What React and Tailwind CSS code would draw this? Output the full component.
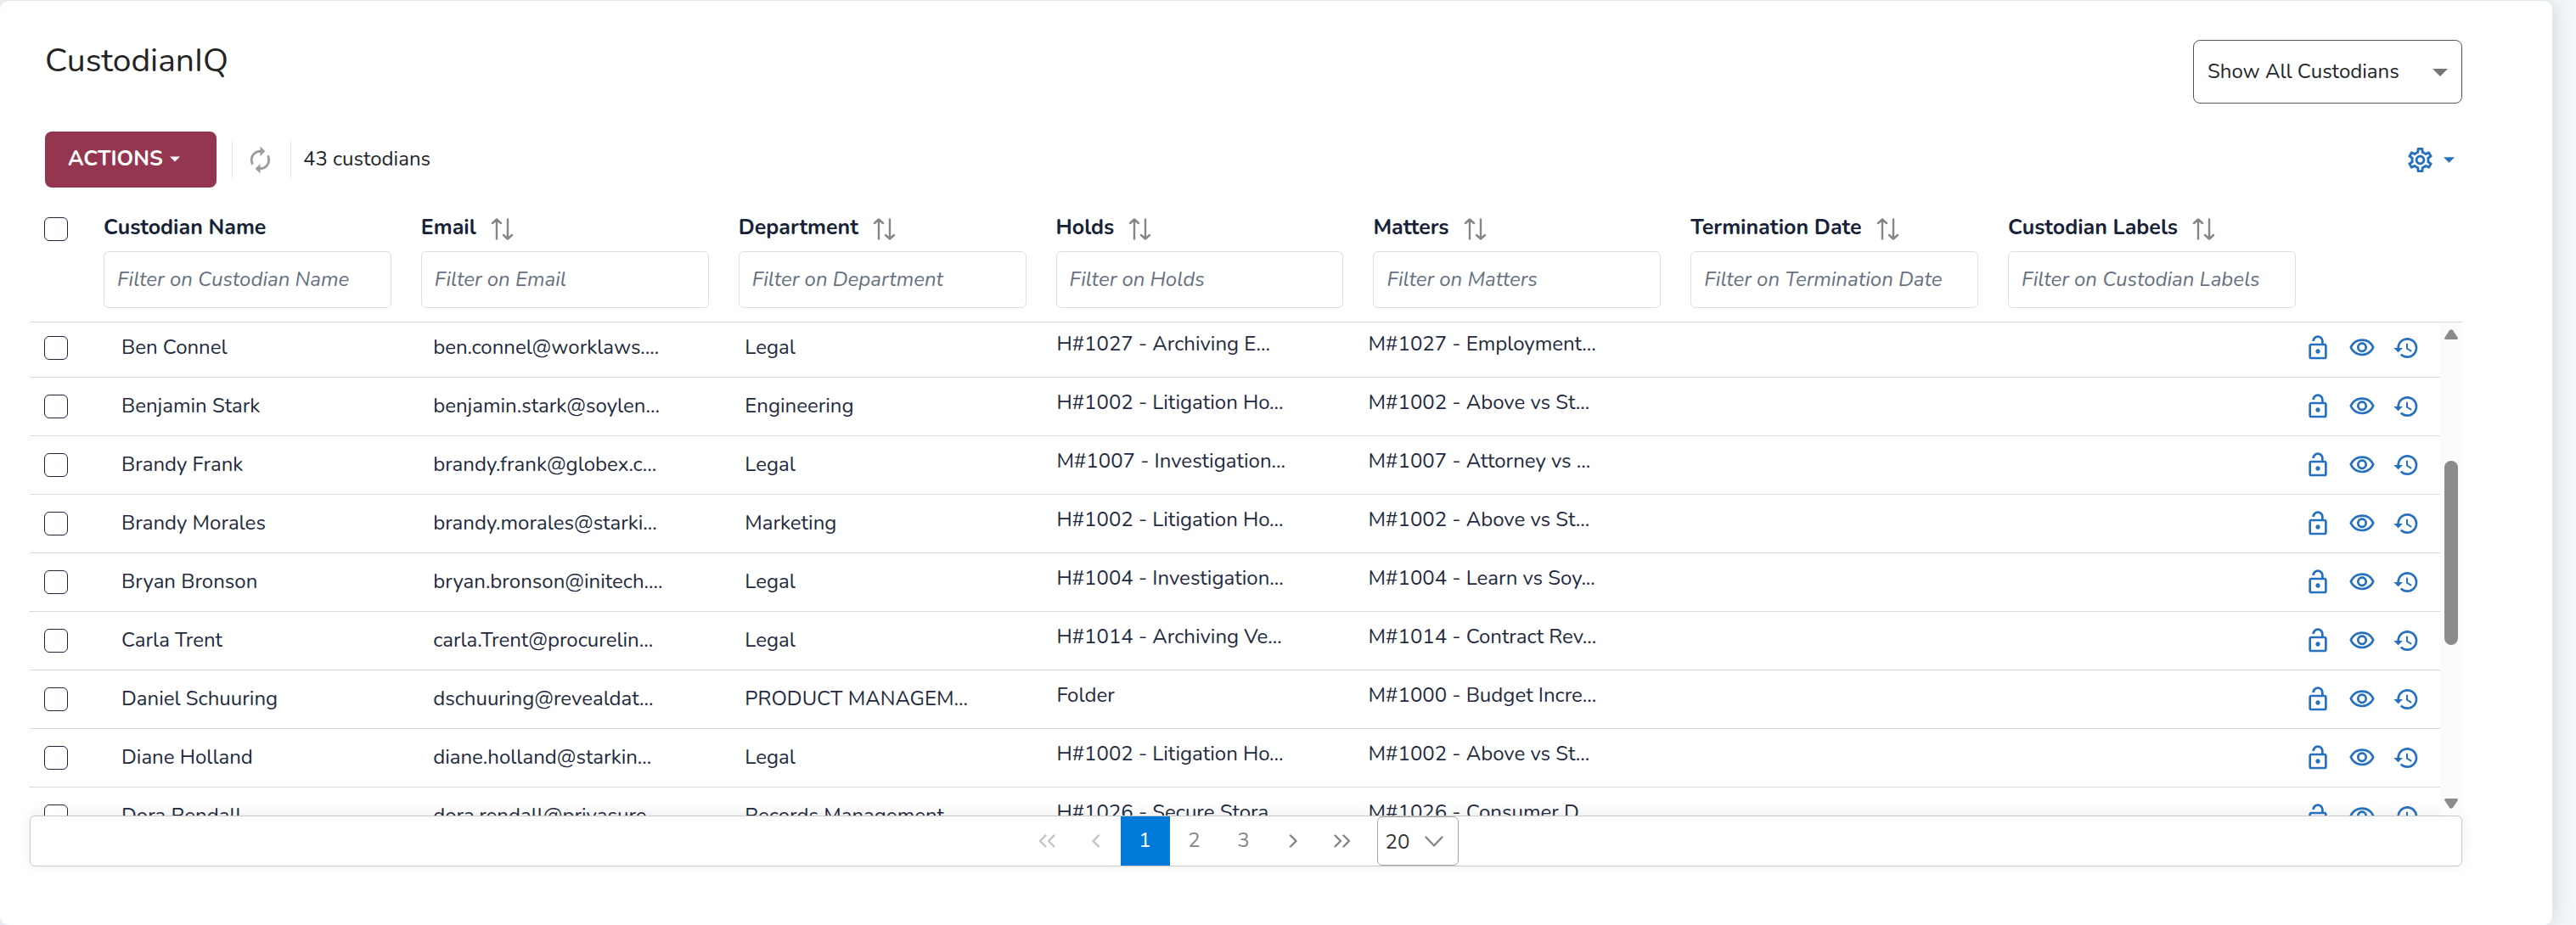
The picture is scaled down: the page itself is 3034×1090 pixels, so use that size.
import { MdAutorenew, MdHistory, MdOutlineLockOpen, MdOutlineVisibility, MdOutlineSettings } from "react-icons/md";

const columns = ["Custodian Name", "Email", "Department", "Holds", "Matters", "Termination Date", "Custodian Labels"];

const custodians = [
  { name: "Ben Connel", email: "ben.connel@worklaws....", department: "Legal", hold: "H#1027 - Archiving E...", matter: "M#1027 - Employment..." },
  { name: "Benjamin Stark", email: "benjamin.stark@soylen...", department: "Engineering", hold: "H#1002 - Litigation Ho...", matter: "M#1002 - Above vs St..." },
  { name: "Brandy Frank", email: "brandy.frank@globex.c...", department: "Legal", hold: "M#1007 - Investigation...", matter: "M#1007 - Attorney vs ..." },
  { name: "Brandy Morales", email: "brandy.morales@starki...", department: "Marketing", hold: "H#1002 - Litigation Ho...", matter: "M#1002 - Above vs St..." },
  { name: "Bryan Bronson", email: "bryan.bronson@initech....", department: "Legal", hold: "H#1004 - Investigation...", matter: "M#1004 - Learn vs Soy..." },
  { name: "Carla Trent", email: "carla.Trent@procurelin...", department: "Legal", hold: "H#1014 - Archiving Ve...", matter: "M#1014 - Contract Rev..." },
  { name: "Daniel Schuuring", email: "dschuuring@revealdat...", department: "PRODUCT MANAGEM...", hold: "Folder", matter: "M#1000 - Budget Incre..." },
  { name: "Diane Holland", email: "diane.holland@starkin...", department: "Legal", hold: "H#1002 - Litigation Ho...", matter: "M#1002 - Above vs St..." },
  { name: "Dora Rendall", email: "dora.rendall@privasure...", department: "Records Management", hold: "H#1026 - Secure Stora...", matter: "M#1026 - Consumer D..." },
];

const Caret = ({ className }) => (
  <svg viewBox="0 0 18 9" className={className} fill="currentColor" aria-hidden="true">
    <path d="M0 0h18L9 9z" />
  </svg>
);

const SortIcon = () => (
  <svg viewBox="0 0 28 26" className="w-7 h-[26px] text-[#858585]" fill="none" stroke="currentColor" strokeWidth="2.4" strokeLinecap="round" strokeLinejoin="round" aria-hidden="true">
    <path d="M7 24.500V1.800M2 6L7 1.500L12 6M20 1.500v22.700M15 20l5 4.500L25 20" />
  </svg>
);

const Checkbox = ({ label }) => (
  <input
    type="checkbox"
    aria-label={label}
    className="block size-7 appearance-none rounded-[6px] border border-[#1b2438] bg-white"
  />
);

const Toolbar = () => (
  <div className="flex items-center h-[66px] ml-[18px] mr-[9px]">
    <button type="button" className="flex items-center gap-2 h-full w-[202px] pl-[27px] pb-0.5 rounded-lg bg-[#943650] text-white text-[25px] font-bold">
      ACTIONS
      <Caret className="w-3 h-[7px]" />
    </button>
    <div className="flex items-center ml-[18px] h-[42px] w-[70px] pr-1 justify-center border-x border-[#dcdcdc]">
      <button type="button" aria-label="Refresh" className="text-[#9e9e9e]">
        <MdAutorenew size={35} />
      </button>
    </div>
    <p className="ml-[14px] pb-0.5 text-[#212529]">43 custodians</p>
    <button type="button" aria-label="Table settings" className="ml-auto flex items-center gap-2.5 text-[#2570bf]">
      <MdOutlineSettings size={35} />
      <Caret className="w-[13px] h-[7px]" />
    </button>
  </div>
);

const HeaderTable = () => (
  <table className="w-full table-fixed border-separate border-spacing-0">
    <colgroup>
      <col className="w-[87px]" />
      {columns.map((c) => (
        <col key={c} />
      ))}
      <col className="w-[161px]" />
    </colgroup>
    <thead>
      <tr className="align-top">
        <th className="pl-[17px] border-b border-[#d9d9d9]">
          <Checkbox label="Select all custodians" />
        </th>
        {columns.map((c, i) => (
          <th key={c} className="pr-[35px] pb-4 border-b border-[#d9d9d9] text-left font-bold text-[#172238]">
            <div className="flex items-center gap-[17px] h-7 mb-3">
              <span className="pb-1 text-[25px] leading-6">{c}</span>
              {i > 0 && (
                <button type="button" aria-label={`Sort by ${c}`}>
                  <SortIcon />
                </button>
              )}
            </div>
            <input
              type="text"
              aria-label={`Filter on ${c}`}
              placeholder={`Filter on ${c}`}
              className="block w-full h-[67px] px-[15px] pb-0.5 rounded-md border border-[#dedede] font-normal placeholder:italic placeholder:text-[#667080]"
            />
          </th>
        ))}
        <th className="border-b border-[#d9d9d9]" />
      </tr>
    </thead>
  </table>
);

const BodyTable = () => (
  <table className="w-full table-fixed border-separate border-spacing-0 text-[#1f2a40]">
    <colgroup>
      <col className="w-[87px]" />
      {columns.map((c) => (
        <col key={c} />
      ))}
      <col className="w-[182px]" />
    </colgroup>
    <tbody className="[&_td]:h-[69px] [&_td]:border-b [&_td]:border-[#d9d9d9] [&_td]:whitespace-nowrap">
      {custodians.map((p) => (
        <tr key={p.name}>
          <td className="pl-[17px]">
            <Checkbox label={`Select ${p.name}`} />
          </td>
          <td className="pl-[21px] pb-0.5">{p.name}</td>
          <td className="pl-[21px] pb-0.5">{p.email}</td>
          <td className="pl-[21px] pb-0.5">{p.department}</td>
          <td className="pl-[21px] pb-2.5">{p.hold}</td>
          <td className="pl-[21px] pb-2.5">{p.matter}</td>
          <td />
          <td />
          <td className="pl-[22px]">
            <div className="flex gap-5 text-[#2570bf]">
              <button type="button" aria-label="Unlock"><MdOutlineLockOpen size={32} /></button>
              <button type="button" aria-label="View"><MdOutlineVisibility size={32} /></button>
              <button type="button" aria-label="History"><MdHistory size={32} /></button>
            </div>
          </td>
        </tr>
      ))}
    </tbody>
  </table>
);

const Scrollbar = () => (
  <div className="w-[26px] shrink-0 bg-[#fbfbfb] flex flex-col items-center py-2 text-[#8b8b8b]">
    <svg viewBox="0 0 16 12" className="w-4 h-3" fill="currentColor"><path d="M6 1.200q2-2 4 0l5.500 8.300q1 2.500-1 2.500h-13q-2 0-1-2.500z" /></svg>
    <div className="mt-[143px] w-4 h-[217px] rounded-full bg-[#8b8b8b]" />
    <svg viewBox="0 0 16 12" className="mt-auto w-4 h-3" fill="currentColor"><path d="M6 10.800q2 2 4 0l5.500-8.300q1-2.500-1-2.500h-13q-2 0-1 2.500z" /></svg>
  </div>
);

const PageArrow = ({ d, label, disabled }) => (
  <button type="button" aria-label={label} disabled={disabled} className="grid place-items-center w-[58px] text-[#858585] disabled:text-[#c3c3c3]">
    <svg viewBox="0 0 20 16" className="w-5 h-4" fill="none" stroke="currentColor" strokeWidth="2.400" strokeLinecap="round" strokeLinejoin="round">
      <path d={d} />
    </svg>
  </button>
);

const Paginator = () => (
  <nav className="flex justify-center h-[60px] rounded-md border border-[#c8c8c8] bg-white text-[#858585] shadow-[0_-2px_16px_rgba(0,0,0,0.08)]">
    <PageArrow label="First page" disabled d="M8.500 1.500L2 8l6.500 6.500M18.500 1.500L12 8l6.500 6.500" />
    <PageArrow label="Previous page" disabled d="M13 1.500L6.500 8l6.500 6.500" />
    <button type="button" className="w-[58px] pb-0.5 bg-[#007ad9] text-white">1</button>
    <button type="button" className="w-[58px] pb-0.5">2</button>
    <button type="button" className="w-[58px] pb-0.5">3</button>
    <PageArrow label="Next page" d="M7 1.500L13.500 8L7 14.500" />
    <PageArrow label="Last page" d="M1.500 1.500L8 8l-6.500 6.500M11.500 1.500L18 8l-6.500 6.500" />
    <div className="relative ml-3 mr-3.5">
      <select aria-label="Rows per page" className="w-24 h-full pl-[9px] pt-0.5 appearance-none rounded-md border border-[#a6a6a6] bg-white text-[#333333]">
        <option>20</option>
      </select>
      <svg viewBox="0 0 22 13" className="absolute right-[18px] top-[23px] w-[22px] h-[13px] pointer-events-none" fill="none" stroke="currentColor" strokeWidth="2.400" strokeLinecap="round" strokeLinejoin="round">
        <path d="M1.500 1.500L11 11.500L20.500 1.500" />
      </svg>
    </div>
  </nav>
);

export default function App() {
  return (
    <div className="min-h-screen flex pt-px pr-7 bg-[#f3f7fb] text-[24px] leading-8 font-[Nunito,Lato,sans-serif]">
      <main className="flex-1 min-w-0 pl-[35px] pr-[106px] rounded-[10px] bg-white shadow-[0_0_24px_rgba(60,70,80,0.2)]">
        <header className="flex justify-between pl-[18px] pt-[46px] mb-[33px]">
          <h1 className="text-[39px] leading-[50px] text-[#242424]">CustodianIQ</h1>
          <div className="relative">
            <select aria-label="Custodian view" className="w-[317px] h-[75px] pl-4 pb-0.5 appearance-none rounded-lg border border-[#55555d] bg-white text-[#212529]">
              <option>Show All Custodians</option>
            </select>
            <Caret className="absolute right-[17px] top-[34px] w-[18px] h-[9px] text-[#757575] pointer-events-none" />
          </div>
        </header>
        <Toolbar />
        <div className="mt-[35px]">
          <HeaderTable />
          <div className="flex h-[581px] overflow-hidden">
            <div className="flex-1 min-w-0 -mt-1">
              <BodyTable />
            </div>
            <Scrollbar />
          </div>
          <Paginator />
        </div>
      </main>
    </div>
  );
}
